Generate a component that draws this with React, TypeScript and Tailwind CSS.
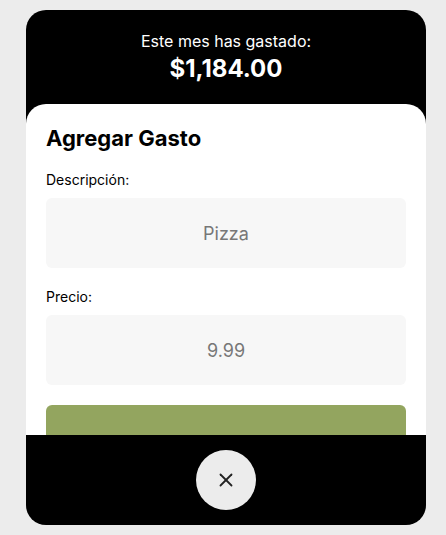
import { X } from "lucide-react";

export default function App() {
  return (
    <div
      className="flex h-[535px] w-[446px] bg-[#ececec] pl-[26px] pt-[10px]"
      style={{ fontFamily: "Inter, 'Noto Sans', sans-serif" }}
    >
      <div className="flex h-[515px] w-[400px] flex-col overflow-hidden rounded-[20px] bg-black">
        <div className="flex h-[94px] flex-col items-center pt-[19px] text-white">
          <p className="text-[16px] leading-[24px]">Este mes has gastado:</p>
          <p className="text-[24px] font-bold leading-[32px]">$1,184.00</p>
        </div>

        <div className="flex-1 overflow-hidden rounded-t-[20px] bg-white px-5 pt-5">
          <h2 className="text-[22px] font-bold leading-[28px] text-black">Agregar Gasto</h2>

          <label className="mt-[18px] block text-[14px] leading-[20px] text-black">Descripción:</label>
          <div className="mt-2 flex h-[70px] items-center justify-center rounded-md bg-[#f7f7f7] text-[18px] text-[#777]">
            Pizza
          </div>

          <label className="mt-[19px] block text-[14px] leading-[20px] text-black">Precio:</label>
          <div className="mt-2 flex h-[70px] items-center justify-center rounded-md bg-[#f7f7f7] text-[18px] text-[#777]">
            9.99
          </div>

          <div className="mt-5 h-[50px] rounded-md bg-[#93a55f]"></div>
        </div>

        <div className="flex h-[90px] items-center justify-center">
          <button className="flex h-[60px] w-[60px] items-center justify-center rounded-full bg-[#ececec] text-[#222]">
            <X size={22} strokeWidth={2} />
          </button>
        </div>
      </div>
    </div>
  );
}
